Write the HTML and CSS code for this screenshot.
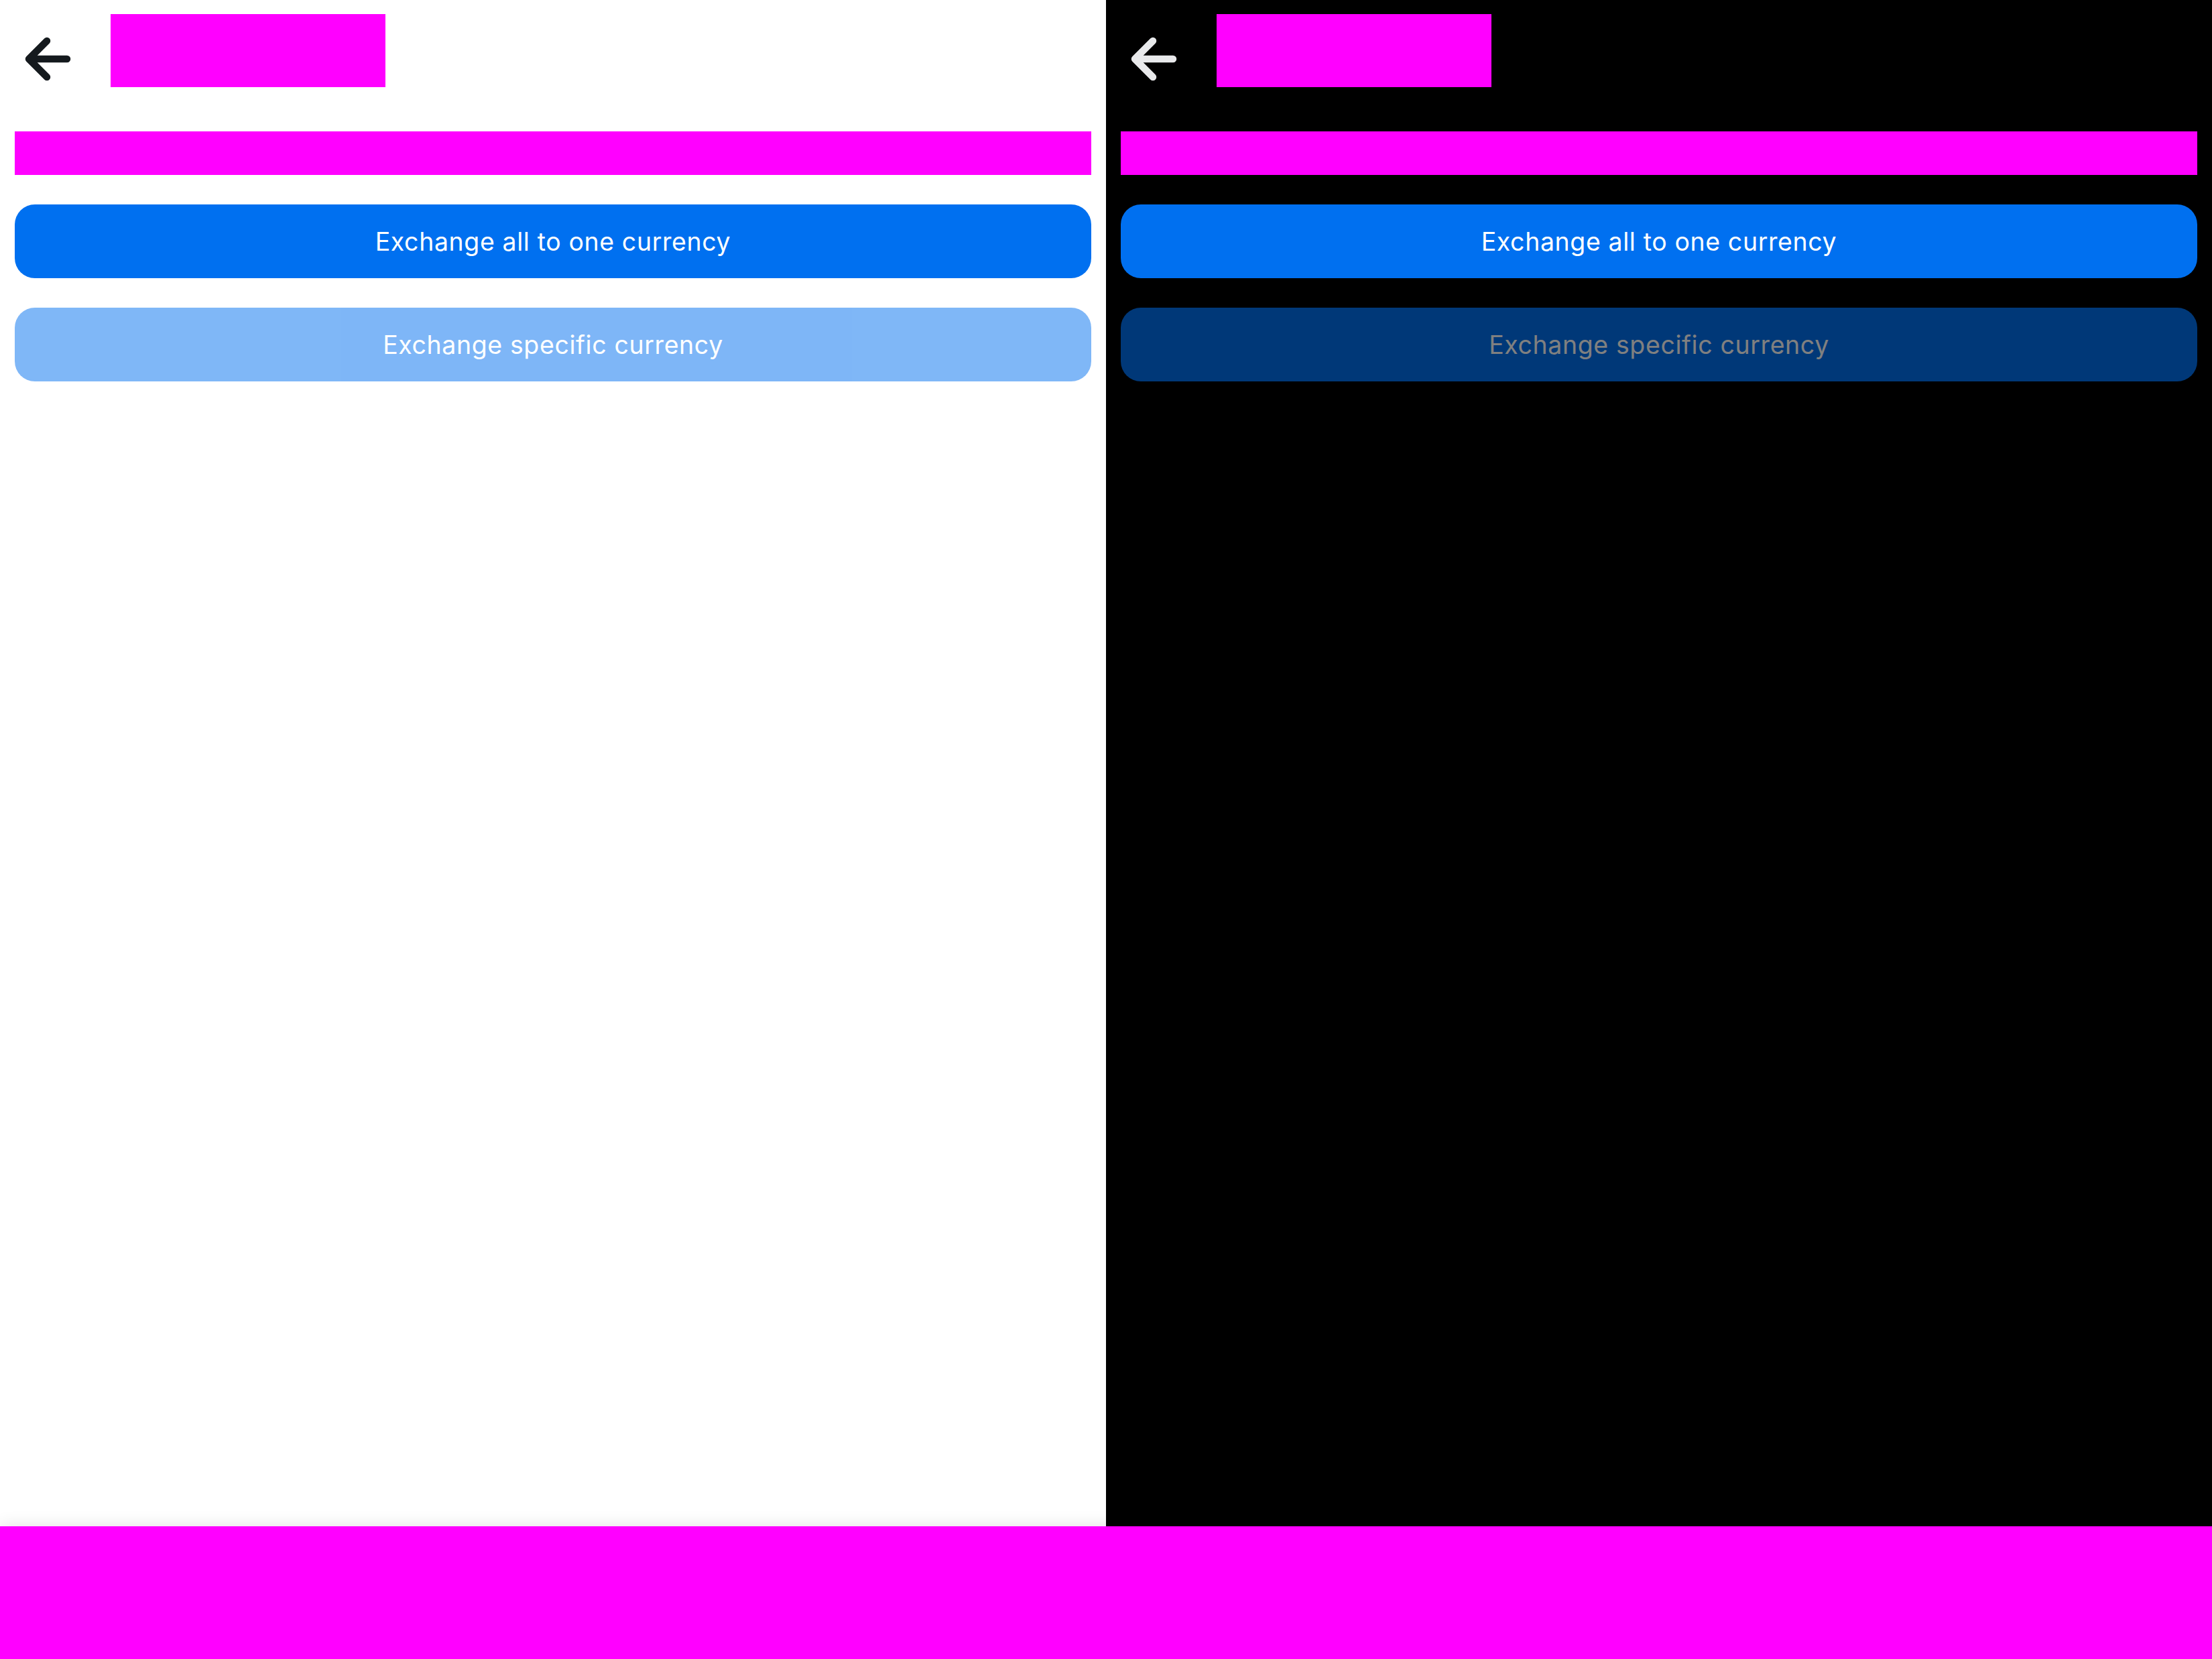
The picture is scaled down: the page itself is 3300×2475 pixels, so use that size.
FILE: index.html
```html
<!DOCTYPE html>
<html lang="en">
<head>
<meta charset="utf-8">
<title>Exchange</title>
<link rel="stylesheet" href="styles.css">
</head>
<body>
<div class="screen">
  <div class="panels">
    <section class="panel panel-light">
      <header class="header">
        <button class="back" aria-label="Back">
          <svg class="back-icon" viewBox="0 0 96 96" width="96" height="96">
            <path d="M24 48 H78 M48 21 L21 48 L48 75" fill="none" stroke="currentColor" stroke-width="10.5" stroke-linecap="round" stroke-linejoin="round"/>
          </svg>
        </button>
        <div class="title-block"></div>
      </header>
      <div class="subtitle-block"></div>
      <button class="action">Exchange all to one currency</button>
      <button class="action action-disabled">Exchange specific currency</button>
    </section>
    <section class="panel panel-dark">
      <header class="header">
        <button class="back" aria-label="Back">
          <svg class="back-icon" viewBox="0 0 96 96" width="96" height="96">
            <path d="M24 48 H78 M48 21 L21 48 L48 75" fill="none" stroke="currentColor" stroke-width="10.5" stroke-linecap="round" stroke-linejoin="round"/>
          </svg>
        </button>
        <div class="title-block"></div>
      </header>
      <div class="subtitle-block"></div>
      <button class="action">Exchange all to one currency</button>
      <button class="action action-disabled">Exchange specific currency</button>
    </section>
  </div>
  <footer class="bottom-bar"></footer>
</div>
</body>
</html>
```
FILE: styles.css
```css
html, body {
  margin: 0;
  padding: 0;
}
body {
  width: 3300px;
  height: 2475px;
  overflow: hidden;
  font-family: Inter, "Noto Sans", sans-serif;
}
.screen {
  display: flex;
  flex-direction: column;
  width: 3300px;
  height: 2475px;
}
.panels {
  display: flex;
  flex: 1;
  min-height: 0;
}
.panel {
  flex: 1;
  display: flex;
  flex-direction: column;
  padding: 0 22px;
  box-sizing: border-box;
}
.panel-light {
  background: #ffffff;
  color: #151a1e;
}
.panel-dark {
  background: #000000;
  color: #e8e9eb;
}
.header {
  display: flex;
  align-items: flex-start;
  padding-top: 21px;
  height: 130px;
  box-sizing: border-box;
}
.back {
  width: 96px;
  height: 96px;
  margin-top: 19px;
  padding: 0;
  border: 0;
  background: transparent;
  color: inherit;
  display: flex;
  align-items: center;
  justify-content: center;
}
.back-icon {
  display: block;
}
.title-block {
  width: 410px;
  height: 109px;
  margin-left: 47px;
  background: #ff00ff;
}
.subtitle-block {
  height: 65px;
  margin-top: 66px;
  background: #ff00ff;
}
.action {
  height: 110px;
  margin-top: 44px;
  border: 0;
  border-radius: 30px;
  background: #0070f0;
  color: #ffffff;
  font-family: Inter, "Noto Sans", sans-serif;
  font-size: 37.5px;
  font-weight: 400;
  letter-spacing: 0.6px;
  padding: 0;
}
.action-disabled {
  opacity: 0.5;
}
.bottom-bar {
  height: 198px;
  flex: none;
  background: #ff00ff;
  box-shadow: 0 0 24px rgba(0, 0, 0, 0.12);
  position: relative;
}
```
